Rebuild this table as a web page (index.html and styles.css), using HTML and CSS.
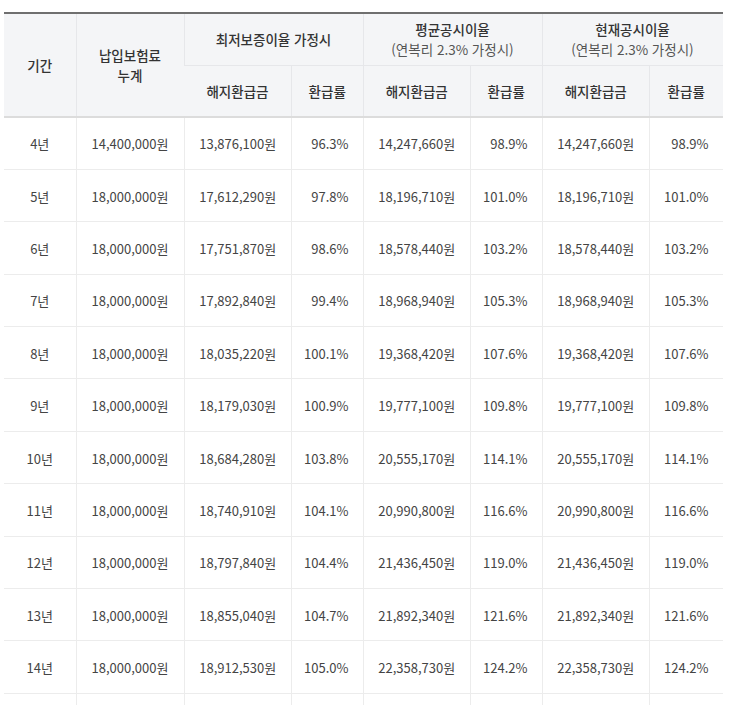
FILE: index.html
```html
<!DOCTYPE html>
<html lang="ko">
<head>
<meta charset="utf-8">
<title>해지환급금 예시표</title>
<link rel="stylesheet" href="styles.css">
</head>
<body>
<table class="refund">
  <colgroup>
    <col class="c-year"><col class="c-paid">
    <col class="c-amt"><col class="c-rate">
    <col class="c-amt"><col class="c-rate">
    <col class="c-amt"><col class="c-rate2">
  </colgroup>
  <thead>
    <tr class="h1">
      <th rowspan="2">기간</th>
      <th rowspan="2" class="two">납입보험료<br>누계</th>
      <th colspan="2">최저보증이율 가정시</th>
      <th colspan="2" class="two">평균공시이율<br><span class="sub">(연복리 2.3% 가정시)</span></th>
      <th colspan="2" class="two last">현재공시이율<br><span class="sub">(연복리 2.3% 가정시)</span></th>
    </tr>
    <tr class="h2">
      <th>해지환급금</th><th>환급률</th>
      <th>해지환급금</th><th>환급률</th>
      <th>해지환급금</th><th class="last">환급률</th>
    </tr>
  </thead>
  <tbody>
    <tr><td>4년</td><td>14,400,000원</td><td>13,876,100원</td><td class="pct">96.3%</td><td>14,247,660원</td><td class="pct">98.9%</td><td>14,247,660원</td><td class="pct last">98.9%</td></tr>
    <tr><td>5년</td><td>18,000,000원</td><td>17,612,290원</td><td class="pct">97.8%</td><td>18,196,710원</td><td class="pct">101.0%</td><td>18,196,710원</td><td class="pct last">101.0%</td></tr>
    <tr><td>6년</td><td>18,000,000원</td><td>17,751,870원</td><td class="pct">98.6%</td><td>18,578,440원</td><td class="pct">103.2%</td><td>18,578,440원</td><td class="pct last">103.2%</td></tr>
    <tr><td>7년</td><td>18,000,000원</td><td>17,892,840원</td><td class="pct">99.4%</td><td>18,968,940원</td><td class="pct">105.3%</td><td>18,968,940원</td><td class="pct last">105.3%</td></tr>
    <tr><td>8년</td><td>18,000,000원</td><td>18,035,220원</td><td class="pct">100.1%</td><td>19,368,420원</td><td class="pct">107.6%</td><td>19,368,420원</td><td class="pct last">107.6%</td></tr>
    <tr><td>9년</td><td>18,000,000원</td><td>18,179,030원</td><td class="pct">100.9%</td><td>19,777,100원</td><td class="pct">109.8%</td><td>19,777,100원</td><td class="pct last">109.8%</td></tr>
    <tr><td>10년</td><td>18,000,000원</td><td>18,684,280원</td><td class="pct">103.8%</td><td>20,555,170원</td><td class="pct">114.1%</td><td>20,555,170원</td><td class="pct last">114.1%</td></tr>
    <tr><td>11년</td><td>18,000,000원</td><td>18,740,910원</td><td class="pct">104.1%</td><td>20,990,800원</td><td class="pct">116.6%</td><td>20,990,800원</td><td class="pct last">116.6%</td></tr>
    <tr><td>12년</td><td>18,000,000원</td><td>18,797,840원</td><td class="pct">104.4%</td><td>21,436,450원</td><td class="pct">119.0%</td><td>21,436,450원</td><td class="pct last">119.0%</td></tr>
    <tr><td>13년</td><td>18,000,000원</td><td>18,855,040원</td><td class="pct">104.7%</td><td>21,892,340원</td><td class="pct">121.6%</td><td>21,892,340원</td><td class="pct last">121.6%</td></tr>
    <tr><td>14년</td><td>18,000,000원</td><td>18,912,530원</td><td class="pct">105.0%</td><td>22,358,730원</td><td class="pct">124.2%</td><td>22,358,730원</td><td class="pct last">124.2%</td></tr>
    <tr class="cut"><td></td><td></td><td></td><td class="pct"></td><td></td><td class="pct"></td><td></td><td class="pct last"></td></tr>
  </tbody>
</table>
</body>
</html>
```

FILE: styles.css
```css
html, body {
  margin: 0;
  padding: 0;
  background: #ffffff;
  overflow: hidden;
}

body {
  padding: 12px 0 0 4px;
  font-family: "Noto Sans CJK KR", "Noto Sans", sans-serif;
  color: #444;
}

.refund {
  width: 718px;
  border-collapse: collapse;
  table-layout: fixed;
  border-top: 2px solid #6f6f6f;
  font-size: 13px;
}

.c-year { width: 72px; }
.c-paid { width: 108px; }
.c-amt { width: 107.5px; }
.c-rate { width: 71.5px; }
.c-rate2 { width: 73px; }

.refund th {
  background: #f4f5f7;
  color: #333;
  font-size: 13.5px;
  font-weight: 500;
  line-height: 20px;
  padding: 0;
  text-align: center;
  vertical-align: middle;
  border-left: 1px solid #e6e7ea;
  border-bottom: 1px solid #e6e7ea;
}

.refund th:first-child,
.refund td:first-child {
  border-left: none;
}

.refund .h1 { height: 52px; }
.refund .h2 { height: 52px; }

.refund .h2 th {
  border-bottom: 2px solid #dcdcdc;
}

.refund th[rowspan] {
  border-bottom: 2px solid #dcdcdc;
}

.refund .sub {
  font-weight: 400;
  color: #555;
}

.refund td {
  height: 52.4px;
  padding: 2px 0 0;
  text-align: center;
  vertical-align: middle;
  line-height: 20px;
  color: #444;
  border-left: 1px solid #ececec;
  border-bottom: 1px solid #ececec;
  box-sizing: border-box;
}

.refund td.pct {
  text-align: right;
  padding-right: 14px;
}
```
